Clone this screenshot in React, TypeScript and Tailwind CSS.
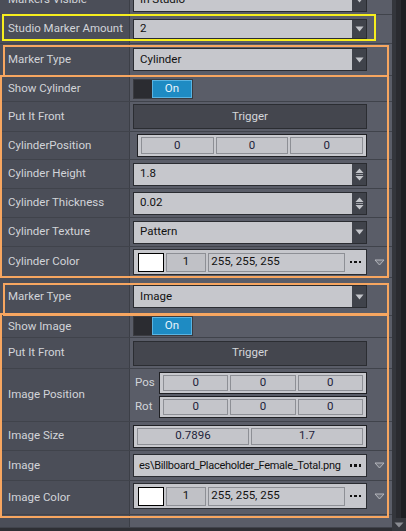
import React from 'react';

const DownTri = () => (
  <svg width="9" height="6" viewBox="0 0 9 6">
    <polygon points="0.5,0.5 8.5,0.5 4.5,5.5" fill="#c3c5ca" />
  </svg>
);

const SpinTri = () => (
  <svg width="9" height="13" viewBox="0 0 9 13">
    <polygon points="4.5,0.5 8.5,5 0.5,5" fill="#c3c5ca" />
    <rect x="1" y="6" width="7" height="1" fill="#9a9ca2" />
    <polygon points="0.5,8 8.5,8 4.5,12.5" fill="#c3c5ca" />
  </svg>
);

const OutTri = () => (
  <svg width="11" height="7" viewBox="0 0 11 7">
    <polygon points="1,1 10,1 5.5,6" fill="#6e717a" stroke="#b4b6bc" strokeWidth="1" />
  </svg>
);

const Dots = () => (
  <div className="flex items-center gap-[2px] pl-[3px] pr-[5px]">
    <span className="w-[2.5px] h-[2.5px] bg-[#111]" />
    <span className="w-[2.5px] h-[2.5px] bg-[#111]" />
    <span className="w-[2.5px] h-[2.5px] bg-[#111]" />
  </div>
);

const Row = ({ label, hClass, children, top }: { label: string; hClass: string; children?: React.ReactNode; top?: boolean }) => (
  <div className={`flex ${hClass} border-b border-[#40434b]`}>
    <div className="w-[130px] shrink-0 bg-[#4b4e58] border-r border-[#3c3f47] flex items-center pl-[8px] text-[#d2d4d9]">{label}</div>
    <div className={`flex-1 flex pl-[3px] ${top ? 'items-start pt-[2px]' : 'items-center'}`}>{children}</div>
  </div>
);

const Dropdown = ({ value, hClass = 'h-[23px]' }: { value: string; hClass?: string }) => (
  <div className={`w-[234px] ${hClass} flex bg-[#c6c7cc] border border-[#2a2c31]`}>
    <div className="flex-1 flex items-center pl-[6px] text-[#111]">{value}</div>
    <div className="w-[14px] bg-[#40434b] flex items-center justify-center">
      <DownTri />
    </div>
  </div>
);

const Spin = ({ value }: { value: string }) => (
  <div className="w-[234px] h-[23px] flex bg-[#c6c7cc] border border-[#2a2c31]">
    <div className="flex-1 flex items-center pl-[6px] text-[#111]">{value}</div>
    <div className="w-[14px] bg-[#40434b] flex items-center justify-center">
      <SpinTri />
    </div>
  </div>
);

const Toggle = () => (
  <div className="h-[20px] flex border border-[#3a3b40]">
    <div className="w-[18px] bg-[#2b2c31]" />
    <div className="w-[40px] bg-[#1e8bc3] border border-[#5ab4e2] flex items-center justify-center text-[#e8f4fc]">On</div>
  </div>
);

const Trigger = () => (
  <div className="w-[234px] h-[25px] bg-[#44464e] border border-[#2b2d32] flex items-center justify-center text-[#d4d6db]">Trigger</div>
);

const Cell = ({ v }: { v: string }) => (
  <div className="flex-1 h-full bg-[#c4c5ca] border border-[#8d8f95] flex items-center justify-center text-[#1e1e3a]">{v}</div>
);

const Vec = ({ values, wClass, hClass }: { values: string[]; wClass: string; hClass: string }) => (
  <div className={`${wClass} ${hClass} bg-[#c8c9ce] border border-[#1f2024] flex gap-[2px] px-[3px] py-[2px]`}>
    {values.map((v, i) => (
      <Cell key={i} v={v} />
    ))}
  </div>
);

const ColorField = () => (
  <div className="flex items-center">
    <div className="w-[234px] h-[26px] bg-[#c6c7cc] border border-[#2a2c31] flex items-center pl-[4px] gap-[2px]">
      <div className="w-[26px] h-[19px] bg-white border border-black" />
      <div className="w-[41px] h-[19px] bg-[#c0c1c6] border border-[#8d8f95] flex items-center justify-center text-[#111]">1</div>
      <div className="w-[138px] h-[19px] bg-[#c6c7cc] border border-[#8d8f95] flex items-center pl-[2px] text-[#111]">255, 255, 255</div>
      <Dots />
    </div>
    <div className="pl-[7px]">
      <OutTri />
    </div>
  </div>
);

const App = () => {
  return (
    <div
      className="w-[406px] h-[531px] overflow-hidden flex bg-[#5a5d68] text-[11.5px] leading-none"
      style={{ fontFamily: 'Roboto, "Liberation Sans", sans-serif' }}
    >
      <div className="w-[392px] shrink-0 flex flex-col">
        <div className="-mt-[14px]">
          <Row label="Markers Visible" hClass="h-[29px]">
            <Dropdown value="In Studio" />
          </Row>
        </div>

        <div className="relative">
          <Row label="Studio Marker Amount" hClass="h-[29px]">
            <Dropdown value="2" hClass="h-[20px]" />
          </Row>
          <div className="absolute -top-px left-[2px] w-[374px] h-[27px] border-2 border-[#f6ee1e] pointer-events-none" />
        </div>

        <div className="relative">
          <Row label="Marker Type" hClass="h-[32px]">
            <Dropdown value="Cylinder" />
          </Row>
          <Row label="Show Cylinder" hClass="h-[26px]">
            <Toggle />
          </Row>
          <Row label="Put It Front" hClass="h-[30px]">
            <Trigger />
          </Row>
          <Row label="CylinderPosition" hClass="h-[28px]">
            <div className="pl-[4px]">
              <Vec values={['0', '0', '0']} wClass="w-[230px]" hClass="h-[23px]" />
            </div>
          </Row>
          <Row label="Cylinder Height" hClass="h-[29px]">
            <Spin value="1.8" />
          </Row>
          <Row label="Cylinder Thickness" hClass="h-[29px]">
            <Spin value="0.02" />
          </Row>
          <Row label="Cylinder Texture" hClass="h-[29px]">
            <Dropdown value="Pattern" />
          </Row>
          <Row label="Cylinder Color" hClass="h-[31px]" top>
            <ColorField />
          </Row>
          <div className="absolute top-px left-[3px] w-[386px] h-[32px] border-2 border-[#f7a660] pointer-events-none" />
          <div className="absolute top-[31px] left-0 w-[389px] h-[203px] border-2 border-[#f7a660] pointer-events-none" />
        </div>

        <div className="relative">
          <Row label="Marker Type" hClass="h-[38px]">
            <Dropdown value="Image" />
          </Row>
          <Row label="Show Image" hClass="h-[22px]" top>
            <div className="-mt-[2px]">
              <Toggle />
            </div>
          </Row>
          <Row label="Put It Front" hClass="h-[31px]">
            <Trigger />
          </Row>
          <Row label="Image Position" hClass="h-[53px]">
            <div className="flex flex-col gap-[2px] -mt-[1px]">
              <div className="flex items-center">
                <span className="w-[26px] pl-[2px] text-[#d2d4d9]">Pos</span>
                <Vec values={['0', '0', '0']} wClass="w-[208px]" hClass="h-[22px]" />
              </div>
              <div className="flex items-center">
                <span className="w-[26px] pl-[2px] text-[#d2d4d9]">Rot</span>
                <Vec values={['0', '0', '0']} wClass="w-[208px]" hClass="h-[22px]" />
              </div>
            </div>
          </Row>
          <Row label="Image Size" hClass="h-[29px]">
            <Vec values={['0.7896', '1.7']} wClass="w-[234px]" hClass="h-[23px]" />
          </Row>
          <Row label="Image" hClass="h-[30px]">
            <div className="flex items-center">
              <div className="w-[234px] h-[23px] bg-[#c6c7cc] border border-[#2a2c31] flex items-center">
                <div className="flex-1 overflow-hidden whitespace-nowrap pl-[5px] text-[#111] text-[11px] tracking-[-0.3px]">es\Billboard_Placeholder_Female_Total.png</div>
                <Dots />
              </div>
              <div className="pl-[7px]">
                <OutTri />
              </div>
            </div>
          </Row>
          <Row label="Image Color" hClass="h-[34px]" top>
            <ColorField />
          </Row>
          <Row label="" hClass="h-[13px]" />
          <div className="h-[3px] bg-[#2e2f34]" />
          <div className="absolute top-[5px] left-[3px] w-[386px] h-[33px] border-2 border-[#f7a660] pointer-events-none" />
          <div className="absolute top-[35px] left-0 w-[389px] h-[205px] border-2 border-[#f7a660] pointer-events-none" />
        </div>
      </div>

      <div className="w-[14px] shrink-0 flex flex-col">
        <div className="flex-1 flex">
          <div className="w-[4px] bg-[#34363c]" />
          <div className="w-[5px] bg-[#2a2b30]" />
          <div className="w-[5px] bg-[#1d1e22]" />
        </div>
        <div className="h-[13px] bg-[#35373d] flex items-center justify-center">
          <svg width="10" height="6" viewBox="0 0 10 6">
            <polygon points="0.5,0.5 9.5,0.5 5,5.5" fill="#8a8c92" />
          </svg>
        </div>
      </div>
    </div>
  );
};

export default App;
